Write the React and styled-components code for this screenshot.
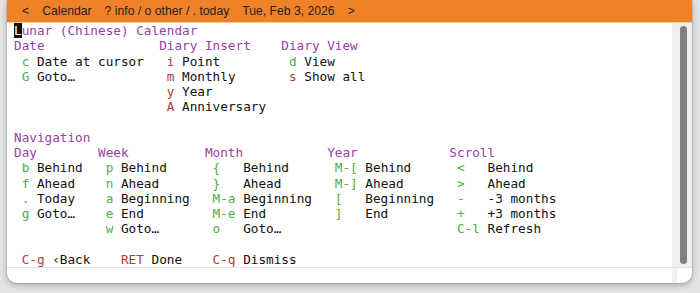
import React from "react";
import styled, { createGlobalStyle } from "styled-components";

const GlobalStyle = createGlobalStyle`
  html, body {
    margin: 0;
    padding: 0;
    background: #e4e4e4;
  }
`;

const Page = styled.div`
  width: 700px;
  height: 293px;
  overflow: hidden;
`;

const Window = styled.div`
  margin-left: 7px;
  width: 685px;
  height: 283px;
  background: #ffffff;
  border-radius: 0 0 10px 10px;
  box-shadow: 0 2px 6px rgba(0, 0, 0, 0.28), 0 0 0 1px rgba(0, 0, 0, 0.08);
  display: flex;
  flex-direction: column;
  overflow: hidden;
`;

const HeaderBar = styled.div`
  height: 22px;
  flex: none;
  background: #ef8229;
  border-bottom: 1px solid #f7c9a2;
  display: flex;
  align-items: center;
  gap: 13px;
  padding-left: 15px;
  font-family: "Liberation Sans", Arial, sans-serif;
  font-size: 12.2px;
  color: #2b2118;
  white-space: pre;
`;

const HeaderItem = styled.span``;

const Main = styled.div`
  flex: none;
  height: 244px;
  display: flex;
  border-bottom: 1px solid #e2e2e2;
`;

const Buffer = styled.div`
  flex: 1;
  padding-left: 7px;
  font-family: "DejaVu Sans Mono", Menlo, monospace;
  font-size: 12.7px;
  line-height: 15.25px;
  color: #111111;
  white-space: pre;
`;

const ScrollTrack = styled.div`
  flex: none;
  width: 20px;
  background: #efefef;
  display: flex;
  justify-content: center;
  padding: 3px 0 3px 2px;
  box-sizing: border-box;
`;

const ScrollThumb = styled.div`
  width: 7px;
  height: 100%;
  border-radius: 4px;
  background: #7f7f7f;
`;

const EchoArea = styled.div`
  flex: 1;
  display: flex;
`;

const EchoFill = styled.div`
  flex: 1;
`;

const EchoGutter = styled.div`
  width: 5px;
  background: #f2f2f2;
  margin-right: 15px;
`;

const Line = styled.div`
  height: 15.25px;
`;

const Heading = styled.span`
  color: #9a40a8;
`;

const Cursor = styled.span`
  display: inline-block;
  width: 1ch;
  background: #111111;
  color: #ffffff;
`;

const Columns = styled.div`
  display: flex;
`;

const Column = styled.div`
  width: ${p => (p.$width ? `${p.$width}ch` : "auto")};
  flex: none;
`;

const Key = styled.span`
  color: ${p => (p.$exit ? "#b33a3a" : "#4cae4c")};
  display: inline-block;
  min-width: ${p => p.$pad || 1}ch;
`;

const Item = ({ k, label, exit, pad }) => (
  <Line>
    {" "}
    <Key $exit={exit} $pad={pad}>
      {k}
    </Key>{" "}
    {label}
  </Line>
);

const Group = ({ title, width, pad, items }) => (
  <Column $width={width}>
    <Line>
      <Heading>{title}</Heading>
    </Line>
    {items.map(([k, label, exit]) => (
      <Item key={k + label} k={k} label={label} exit={exit} pad={pad} />
    ))}
  </Column>
);

const topGroups = [
  {
    title: "Date",
    width: 19,
    items: [
      ["c", "Date at cursor"],
      ["G", "Goto…"],
    ],
  },
  {
    title: "Diary Insert",
    width: 16,
    items: [
      ["i", "Point", true],
      ["m", "Monthly", true],
      ["y", "Year", true],
      ["A", "Anniversary", true],
    ],
  },
  {
    title: "Diary View",
    items: [
      ["d", "View"],
      ["s", "Show all", true],
    ],
  },
];

const navGroups = [
  {
    title: "Day",
    width: 11,
    items: [
      ["b", "Behind"],
      ["f", "Ahead"],
      [".", "Today"],
      ["g", "Goto…"],
    ],
  },
  {
    title: "Week",
    width: 14,
    items: [
      ["p", "Behind"],
      ["n", "Ahead"],
      ["a", "Beginning"],
      ["e", "End"],
      ["w", "Goto…"],
    ],
  },
  {
    title: "Month",
    width: 16,
    pad: 3,
    items: [
      ["{", "Behind"],
      ["}", "Ahead"],
      ["M-a", "Beginning"],
      ["M-e", "End"],
      ["o", "Goto…"],
    ],
  },
  {
    title: "Year",
    width: 16,
    pad: 3,
    items: [
      ["M-[", "Behind"],
      ["M-]", "Ahead"],
      ["[", "Beginning"],
      ["]", "End"],
    ],
  },
  {
    title: "Scroll",
    pad: 3,
    items: [
      ["<", "Behind"],
      [">", "Ahead"],
      ["-", "-3 months"],
      ["+", "+3 months"],
      ["C-l", "Refresh"],
    ],
  },
];

const footer = [
  { k: "C-g", label: "‹Back", width: 13 },
  { k: "RET", label: "Done", width: 12 },
  { k: "C-q", label: "Dismiss" },
];

const App = () => (
  <Page>
    <GlobalStyle />
    <Window>
      <HeaderBar>
        <HeaderItem>{"<"}</HeaderItem>
        <HeaderItem>Calendar</HeaderItem>
        <HeaderItem>? info / o other / . today</HeaderItem>
        <HeaderItem>Tue, Feb 3, 2026</HeaderItem>
        <HeaderItem>{">"}</HeaderItem>
      </HeaderBar>
      <Main>
        <Buffer>
          <Line>
            <Cursor>L</Cursor>
            <Heading>unar (Chinese) Calendar</Heading>
          </Line>
          <Columns>
            {topGroups.map(g => (
              <Group key={g.title} {...g} />
            ))}
          </Columns>
          <Line />
          <Line>
            <Heading>Navigation</Heading>
          </Line>
          <Columns>
            {navGroups.map(g => (
              <Group key={g.title} {...g} />
            ))}
          </Columns>
          <Line />
          <Columns>
            {footer.map(f => (
              <Column key={f.k} $width={f.width}>
                <Item k={f.k} label={f.label} exit />
              </Column>
            ))}
          </Columns>
        </Buffer>
        <ScrollTrack>
          <ScrollThumb />
        </ScrollTrack>
      </Main>
      <EchoArea>
        <EchoFill />
        <EchoGutter />
      </EchoArea>
    </Window>
  </Page>
);

export default App;
